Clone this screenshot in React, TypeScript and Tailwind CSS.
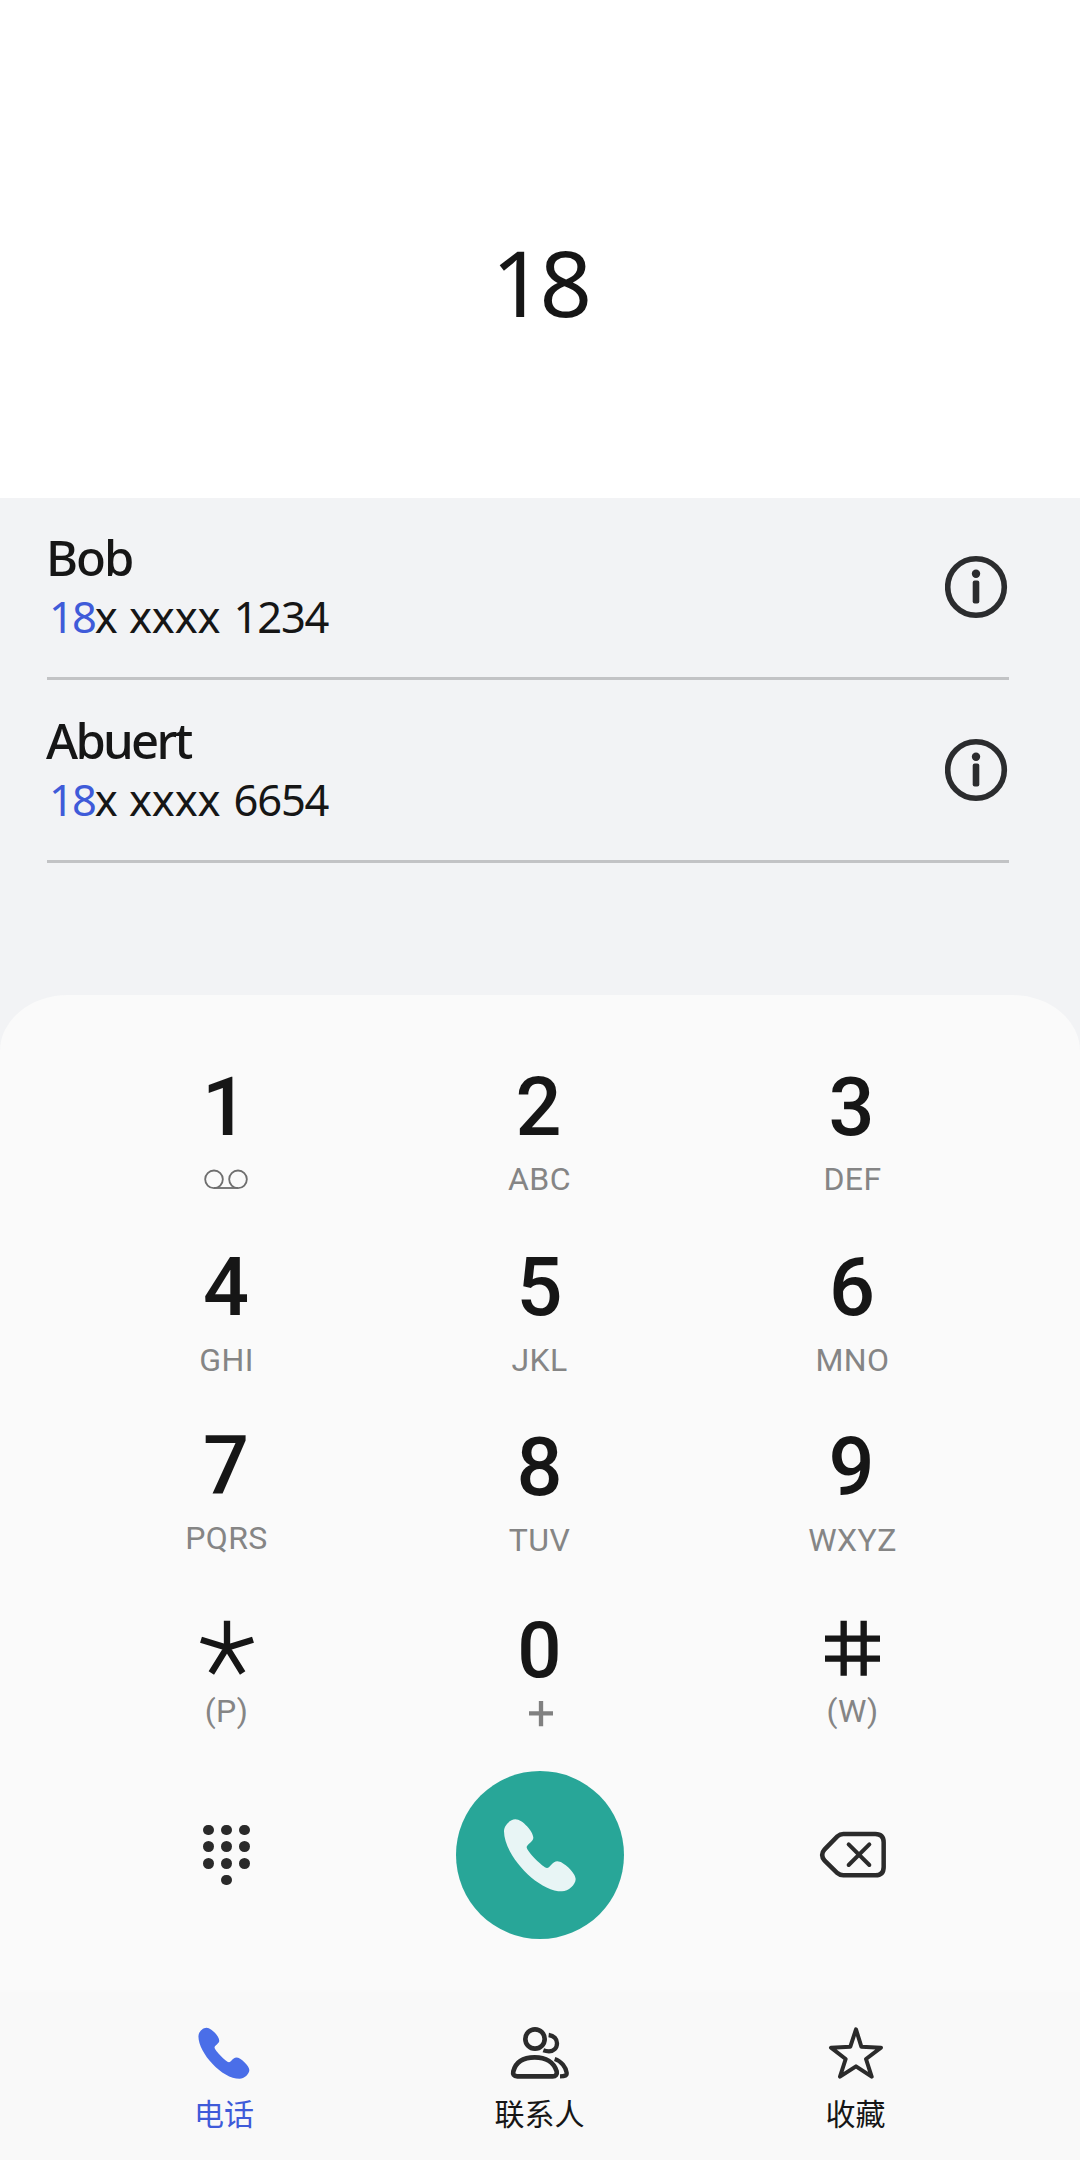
import React from "react";

type KeyDef = { digit?: string; label?: string; glyph?: React.ReactNode; sub?: React.ReactNode; shift?: string; cell?: string };

const Star5 = () => (
  <svg className="h-[80px] w-[60px]" viewBox="80 599 180 240" fill="none" stroke="#161616" strokeWidth="19">
    <path d="M170 631V712M92 688L170 712L248 688M123 788L170 712L217 788" />
  </svg>
);

const Hash = () => (
  <svg className="h-[80px] w-[60px]" viewBox="99 599 180 240" fill="none" stroke="#161616" strokeWidth="19">
    <path d="M161 631V796M221 631V796M105 685H270M105 745H270" />
  </svg>
);

const Voicemail = () => (
  <svg className="h-[40px] w-[50px]" viewBox="97 329 150 120" fill="none" stroke="#6e6e6e" strokeWidth="5.500">
    <circle cx="133" cy="390" r="26.500" />
    <circle cx="205" cy="390" r="26.500" />
    <path d="M133 416H205" />
  </svg>
);

const Plus = () => (
  <svg className="h-[40px] w-[30px]" viewBox="136 845 90 120" fill="none" stroke="#808080" strokeWidth="13">
    <path d="M184 875V951M148 912H220" />
  </svg>
);

const Handset = ({ className }: { className: string }) => (
  <svg className={className} viewBox="216 200 228 228" fill="currentColor">
    <path d="M256 207C278 207 310 245 310 262C310 274 290 282 290 291C290 302 339 353 351 353C360 353 368 333 382 333C400 333 437 368 437 386C437 403 415 423 396 423C322 423 222 314 222 243C222 225 240 207 256 207Z" />
  </svg>
);

const Info = () => (
  <svg className="size-[64px]" viewBox="-31 -32 64 64">
    <circle r="28.300" fill="none" stroke="#2b2c2e" strokeWidth="5.600" />
    <circle cy="-13.300" r="4.200" fill="#2b2c2e" />
    <rect x="-3.300" y="-6.500" width="6.600" height="23" rx="2" fill="#2b2c2e" />
  </svg>
);

const Backspace = () => (
  <svg className="h-[52px] w-[70px]" viewBox="1164 238 210 156" fill="none" stroke="#2b2b2b" strokeWidth="13.500">
    <path d="M1240 253H1336Q1361 253 1361 278V352Q1361 377 1336 377H1240Q1230 377 1222 370L1184 333Q1169 316 1184 299L1222 260Q1230 253 1240 253Z" />
    <path d="M1256 284L1318 346M1318 284L1256 346" strokeLinecap="round" strokeWidth="12" />
  </svg>
);

const PadDots = () => (
  <div className="grid w-[47px] grid-cols-3 justify-items-center gap-x-[7.500px] gap-y-[6.100px]">
    {[0, 1, 2, 3, 4, 5, 6, 7, 8].map((i) => (
      <span key={i} className="size-[10.500px] rounded-full bg-[#2a2a2a]" />
    ))}
    <span className="col-start-2 size-[10.500px] rounded-full bg-[#2a2a2a]" />
  </div>
);

const People = () => (
  <svg className="h-[54px] w-[62px]" viewBox="117 107 186 162" fill="none" stroke="#2b2b2b" strokeWidth="14">
    <circle cx="195" cy="146" r="29" />
    <path d="M142 258C131 258 128 252 130 243C137 216 160 201 194 201C228 201 252 216 260 243C262 252 257 258 248 258Z" />
    <path d="M236 134C252 136 261 146 261 159C261 174 250 183 237 183Q228 183 220 180" strokeWidth="13" />
    <path d="M254 206C274 212 288 232 290 247C291 255 286 258 270 258" strokeWidth="13" />
  </svg>
);

const FavStar = () => (
  <svg className="h-[54px] w-[56px]" viewBox="1074 107 168 162" fill="none" stroke="#2b2b2b" strokeWidth="12" strokeLinejoin="round">
    <path d="M1158 117L1174 169L1233 172L1188 206L1205 259L1158 228L1110 259L1127 206L1083 172L1141 169Z" />
  </svg>
);

const rows: { top: string; gap: string; keys: KeyDef[] }[] = [
  { top: "h-[180px]", gap: "gap-[11px]", keys: [{ digit: "1", sub: <Voicemail />, shift: "pr-[3px]" }, { digit: "2", label: "ABC", shift: "pr-[2px]" }, { digit: "3", label: "DEF", shift: "pr-[2px]" }] },
  { top: "h-[180px]", gap: "gap-[12px]", keys: [{ digit: "4", label: "GHI", shift: "pr-[1px]" }, { digit: "5", label: "JKL" }, { digit: "6", label: "MNO", shift: "pr-[1px]" }] },
  { top: "h-[182px]", gap: "gap-[12px]", keys: [{ digit: "7", label: "PQRS", cell: "-mt-[2px]", shift: "pr-[1px]" }, { digit: "8", label: "TUV" }, { digit: "9", label: "WXYZ", shift: "pr-[2px]" }] },
  { top: "h-[140px]", gap: "gap-[1px]", keys: [{ glyph: <Star5 />, label: "(P)" }, { digit: "0", sub: <Plus />, shift: "pt-[1px] -mb-[1px] text-[78px]" }, { glyph: <Hash />, label: "(W)" }] },
];

const contacts = [
  { name: "Bob", mask: "x xxxx", tail: "1234", track: "tracking-[-2px]" },
  { name: "Abuert", mask: "x xxxx", tail: "6654", track: "tracking-[-2.700px]" },
];

export default function App() {
  return (
    <div className="flex h-[2160px] w-[1080px] flex-col overflow-hidden bg-[#f2f3f5] text-[#161616]">
      <header className="h-[498px] bg-white pr-[1px] pt-[222px] text-center font-['Noto_Sans'] text-[92px] leading-[120px] tracking-[-4.500px]">18</header>

      <section className="h-[497px] pl-[47px] pr-[71px]">
        {contacts.map((c) => (
          <div key={c.name} className="flex h-[183px] items-start justify-between border-b-[3px] border-[#c2c3c5] pt-[30px] first:h-[182px] first:pt-[29px]">
            <div className="font-['Noto_Sans']">
              <div className={`-ml-[1px] text-[49px] font-medium leading-[60px] ${c.track}`}>{c.name}</div>
              <div className="mt-[4px] flex pl-[2px] text-[43.500px] leading-[50px]">
                <span className="tracking-[-2px] text-[#3f5bd9]">18</span>
                <span className="tracking-[-0.100px]">{c.mask}</span>
                <span className="ml-[13px] tracking-[-1.200px]">{c.tail}</span>
              </div>
            </div>
            <div className="pt-[28px]">
              <Info />
            </div>
          </div>
        ))}
      </section>

      <main className="h-[997px] bg-[#fafafa] pl-[70px] pt-[73px] [border-radius:68px_68px_0_0/56px_56px_0_0]">
        {rows.map((row, i) => (
          <div key={i} className={`grid w-[939px] grid-cols-3 ${row.top}`}>
            {row.keys.map((k, j) => (
              <div key={j} className={`flex flex-col items-center font-['Roboto'] text-[81px] ${row.gap} ${k.cell ?? ""}`}>
                {k.digit ? (
                  <span className={`font-medium leading-[80px] ${k.shift ?? ""}`}>{k.digit}</span>
                ) : (
                  k.glyph
                )}
                {k.label ? <span className="text-[32px] leading-[40px] tracking-[0.400px] text-[#858585]">{k.label}</span> : k.sub}
              </div>
            ))}
          </div>
        ))}
        <div className="mt-[21px] grid w-[939px] grid-cols-3 items-center justify-items-center">
          <PadDots />
          <button className="flex size-[168px] items-center justify-center rounded-full bg-[#28a698] text-[#e8f5f5]">
            <Handset className="size-[76px]" />
          </button>
          <Backspace />
        </div>
      </main>

      <nav className="grid h-[168px] grid-cols-[316px_315px_317px] bg-[#f9f9f9] pl-[66px] pt-[34px] font-['Noto_Sans_CJK_SC'] text-[30px] leading-[40px]">
        <div className="flex flex-col items-center text-[#3f5bd9]">
          <Handset className="size-[54px] text-[#4a6ee8]" />
          <span className="mt-[12px]">电话</span>
        </div>
        <div className="flex flex-col items-center">
          <People />
          <span className="mt-[12px]">联系人</span>
        </div>
        <div className="flex flex-col items-center">
          <FavStar />
          <span className="mt-[12px]">收藏</span>
        </div>
      </nav>
    </div>
  );
}
